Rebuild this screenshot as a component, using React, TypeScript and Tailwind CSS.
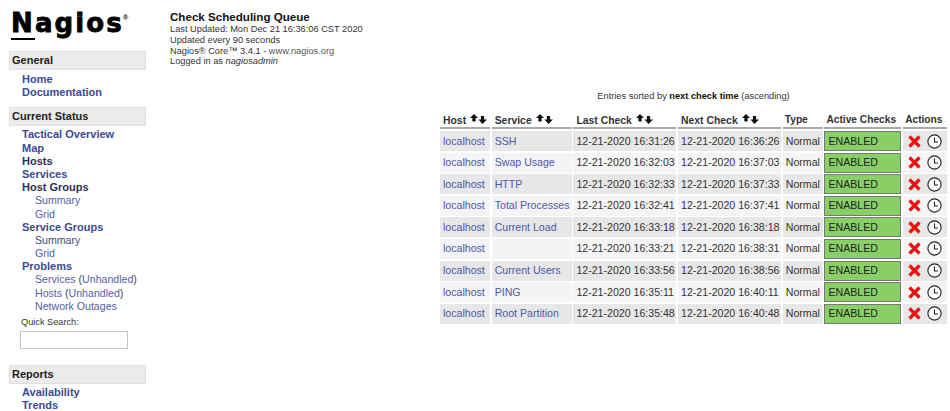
import * as React from "react";

const rows = [
  ["SSH", "12-21-2020 16:31:26", "12-21-2020 16:36:26"],
  ["Swap Usage", "12-21-2020 16:32:03", "12-21-2020 16:37:03"],
  ["HTTP", "12-21-2020 16:32:33", "12-21-2020 16:37:33"],
  ["Total Processes", "12-21-2020 16:32:41", "12-21-2020 16:37:41"],
  ["Current Load", "12-21-2020 16:33:18", "12-21-2020 16:38:18"],
  ["", "12-21-2020 16:33:21", "12-21-2020 16:38:31"],
  ["Current Users", "12-21-2020 16:33:56", "12-21-2020 16:38:56"],
  ["PING", "12-21-2020 16:35:11", "12-21-2020 16:40:11"],
  ["Root Partition", "12-21-2020 16:35:48", "12-21-2020 16:40:48"],
];

const SortArrows = () => (
  <svg width="17" height="10" viewBox="0 0 17 10" className="ml-[4px] mb-[3px] shrink-0">
    <path d="M4 0 L8 4 H5.6 V7.5 H2.4 V4 H0 Z M10.9 2 H14.1 V5.5 H17 L12.5 10 L8.5 5.5 H10.9 Z" fill="#111" />
  </svg>
);

const DeleteIcon = () => (
  <svg width="13" height="13" viewBox="0 0 13 13">
    <path d="M1.5 1.5 L11.5 11.5 M11.5 1.5 L1.5 11.5" stroke="#ee1111" strokeWidth="3.2" fill="none" />
  </svg>
);

const ClockIcon = () => (
  <svg width="15" height="15" viewBox="0 0 15 15">
    <circle cx="7.5" cy="7.5" r="6.6" stroke="#222" strokeWidth="1.1" fill="#fff" />
    <path d="M7.5 3.5 V8 H11" stroke="#222" strokeWidth="1.1" fill="none" />
  </svg>
);

const SectionTitle = ({ children }: { children: React.ReactNode }) => (
  <div className="h-[19px] bg-[#ebebeb] border border-[#e0e0e0] px-[2px] text-[11px] leading-[17px] font-bold text-[#222]">
    {children}
  </div>
);

const MainLink = ({ children, dark }: { children: React.ReactNode; dark?: boolean }) => (
  <div className={`h-[13.2px] pl-[13px] text-[11px] leading-[13px] font-bold ${dark ? "text-[#2f3050]" : "text-[#3b4a96]"}`}>
    {children}
  </div>
);

const SubLink = ({ children, dark }: { children: React.ReactNode; dark?: boolean }) => (
  <div className={`h-[13.2px] pl-[26px] text-[10.6px] leading-[13px] ${dark ? "text-[#444a70]" : "text-[#5560a8]"}`}>
    {children}
  </div>
);

const Sidebar = () => (
  <div className="w-[137px] ml-[9px] shrink-0">
    <div className="h-[51px] relative">
      <div className="absolute left-[2px] top-[8px] font-['DejaVu_Sans'] font-bold text-[26px] leading-[30px] tracking-[2.1px] [-webkit-text-stroke:0.8px_#000] text-black whitespace-nowrap">
        <span className="border-b-[2px] border-black inline-block leading-[29px]">N</span>agios
      </div>
      <span className="absolute left-[114px] top-[14px] text-[7px] leading-[8px] font-bold text-black">®</span>
    </div>
    <SectionTitle>General</SectionTitle>
    <div className="pt-[3px]">
      <MainLink>Home</MainLink>
      <MainLink>Documentation</MainLink>
    </div>
    <div className="mt-[8px]">
      <SectionTitle>Current Status</SectionTitle>
    </div>
    <div className="pt-[2px]">
      <MainLink>Tactical Overview</MainLink>
      <MainLink>Map</MainLink>
      <MainLink dark>Hosts</MainLink>
      <MainLink>Services</MainLink>
      <MainLink dark>Host Groups</MainLink>
      <SubLink>Summary</SubLink>
      <SubLink>Grid</SubLink>
      <MainLink>Service Groups</MainLink>
      <SubLink dark>Summary</SubLink>
      <SubLink>Grid</SubLink>
      <MainLink>Problems</MainLink>
      <SubLink>
        Services <span className="text-[#444]">(</span>Unhandled<span className="text-[#444]">)</span>
      </SubLink>
      <SubLink>
        Hosts <span className="text-[#444]">(</span>Unhandled<span className="text-[#444]">)</span>
      </SubLink>
      <SubLink>Network Outages</SubLink>
    </div>
    <div className="pl-[12px] pt-[3px] text-[9.2px] leading-[13px] text-[#333]">Quick Search:</div>
    <div className="ml-[11px] mt-[2px] h-[18px] w-[108px] border border-[#c4c4c4] bg-white" />
    <div className="mt-[16px]">
      <SectionTitle>Reports</SectionTitle>
    </div>
    <div className="pt-[2px]">
      <MainLink>Availability</MainLink>
      <MainLink>Trends</MainLink>
    </div>
  </div>
);

const headCell = "flex items-end border-b-2 border-[#aaaaaa] font-bold text-[10.4px] leading-[13px] text-[#333] pl-[3px] whitespace-nowrap";
const headCellTight = "flex items-end border-b-2 border-[#aaaaaa] font-bold text-[10.2px] leading-[13px] text-[#333] pl-[2px] pb-[1px] whitespace-nowrap";
const cell = "flex items-center pl-[3px] text-[10.6px] leading-[13px] whitespace-nowrap";

const QueueTable = () => (
  <div className="grid grid-cols-[50px_80px_103px_103px_40px_77px_44px] auto-rows-[19.9px] gap-[1.7px] w-[507.2px]">
    <div className={headCell}>Host<SortArrows /></div>
    <div className={headCell}>Service<SortArrows /></div>
    <div className={headCell}>Last Check<SortArrows /></div>
    <div className={headCell}>Next Check<SortArrows /></div>
    <div className={headCellTight}>Type</div>
    <div className={headCellTight}>Active Checks</div>
    <div className={headCellTight}>Actions</div>
    {rows.map((row, i) => {
      const bg = i % 2 === 0 ? "bg-[#e7e7e7]" : "bg-[#f4f4f4]";
      return (
        <React.Fragment key={i}>
          <div className={`${cell} ${bg} text-[#4a5aa8]`}>localhost</div>
          <div className={`${cell} ${bg} text-[#4a5aa8] text-[10.3px]`}>{row[0]}</div>
          <div className={`${cell} ${bg} text-[#333]`}>{row[1]}</div>
          <div className={`${cell} ${bg} text-[#333]`}>{row[2]}</div>
          <div className={`${cell} ${bg} text-[#333]`}>Normal</div>
          <div className={`${cell} border border-[#777777] bg-[#88d066] text-[#222]`}>ENABLED</div>
          <div className={`flex items-center gap-[6px] pl-[5px] ${bg}`}>
            <DeleteIcon />
            <ClockIcon />
          </div>
        </React.Fragment>
      );
    })}
  </div>
);

export default function App() {
  return (
    <div className="flex w-[950px] h-[411px] overflow-hidden bg-white font-['Liberation_Sans',Arial,sans-serif]">
      <Sidebar />
      <div className="flex-1 min-w-0 flex flex-col">
        <div className="pl-[24px] pt-[10px] text-[#333]">
          <div className="text-[11.6px] leading-[13px] font-bold text-[#111]">Check Scheduling Queue</div>
          <div className="text-[9.25px] leading-[10.8px] mt-[1px]">Last Updated: Mon Dec 21 16:36:06 CST 2020</div>
          <div className="text-[9.25px] leading-[10.8px]">Updated every 90 seconds</div>
          <div className="text-[9.25px] leading-[10.8px]">
            Nagios® Core™ 3.4.1 - <span className="text-[#555]">www.nagios.org</span>
          </div>
          <div className="text-[9.25px] leading-[10.8px]">
            Logged in as <i>nagiosadmin</i>
          </div>
        </div>
        <div className="pl-[294px] pt-[23px]">
          <div className="w-[507px] text-[9.25px] leading-[12px] text-center text-[#333]">
            Entries sorted by <b className="text-[#111]">next check time</b> (ascending)
          </div>
          <div className="mt-[7.4px]">
            <QueueTable />
          </div>
        </div>
      </div>
    </div>
  );
}
